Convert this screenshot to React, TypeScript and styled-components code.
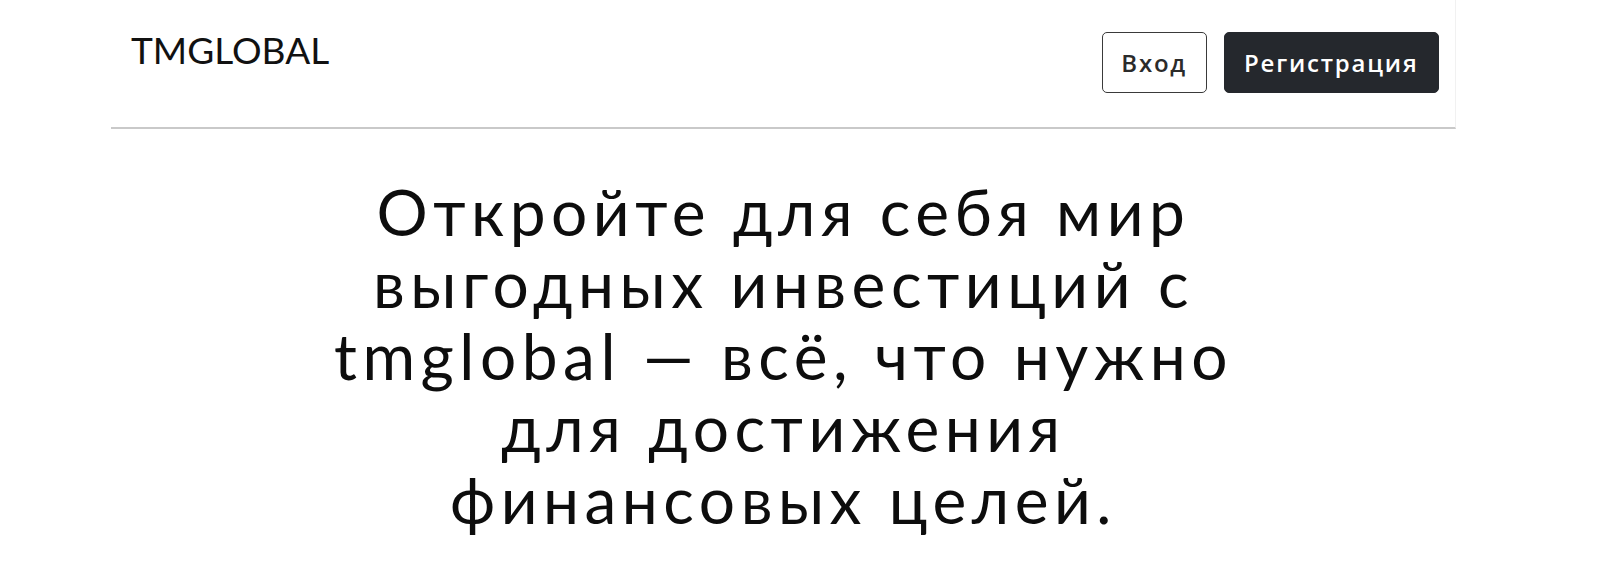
import * as React from "react"
import styled, { createGlobalStyle } from "styled-components"

const GlobalStyle = createGlobalStyle`
  html, body {
    margin: 0;
    padding: 0;
    background: #ffffff;
  }
  body {
    font-family: "Lato", "Open Sans", "Liberation Sans", sans-serif;
    color: #111111;
  }
`

const Page = styled.div`
  width: 1345px;
  margin-left: 111px;
`

const Header = styled.header`
  display: flex;
  align-items: flex-start;
  justify-content: space-between;
  height: 129px;
  padding: 0 16px 0 20px;
  border-bottom: 2px solid #c9c9c9;
  border-right: 1px solid #f1f1f1;
  box-sizing: border-box;
`

const Logo = styled.div`
  font-family: "Lato", "Liberation Sans", sans-serif;
  font-size: 37px;
  font-weight: 400;
  letter-spacing: 0;
  color: #111111;
  margin-top: 27px;
`

const Actions = styled.div`
  display: flex;
  gap: 17px;
  margin-top: 32px;
`

const Button = styled.button<{ $primary?: boolean }>`
  height: 61px;
  padding: 0 ${(p) => (p.$primary ? "19.5px" : "18.5px")};
  border-radius: 5px;
  border: 1px solid ${(p) => (p.$primary ? "#25282d" : "#3a3a3a")};
  background: ${(p) => (p.$primary ? "#25282d" : "#ffffff")};
  color: ${(p) => (p.$primary ? "#ffffff" : "#2b2b2b")};
  font-family: "Open Sans", "Liberation Sans", sans-serif;
  font-size: 24px;
  font-weight: 600;
  letter-spacing: 1.8px;
  cursor: pointer;
`

const Hero = styled.section`
  display: flex;
  justify-content: center;
  padding-top: 47px;
`

const Title = styled.h1`
  margin: 0;
  text-align: center;
  font-family: "Lato", "Open Sans", sans-serif;
  font-size: 64px;
  font-weight: 400;
  line-height: 72px;
  letter-spacing: 5.5px;
  color: #0d0d0d;
`

const App = () => (
  <>
    <GlobalStyle />
    <Page>
      <Header>
        <Logo>TMGLOBAL</Logo>
        <Actions>
          <Button>Вход</Button>
          <Button $primary>Регистрация</Button>
        </Actions>
      </Header>
      <Hero>
        <Title>
          Откройте для себя мир
          <br />
          выгодных инвестиций с
          <br />
          tmglobal — всё, что нужно
          <br />
          для достижения
          <br />
          финансовых целей.
        </Title>
      </Hero>
    </Page>
  </>
)

export default App
